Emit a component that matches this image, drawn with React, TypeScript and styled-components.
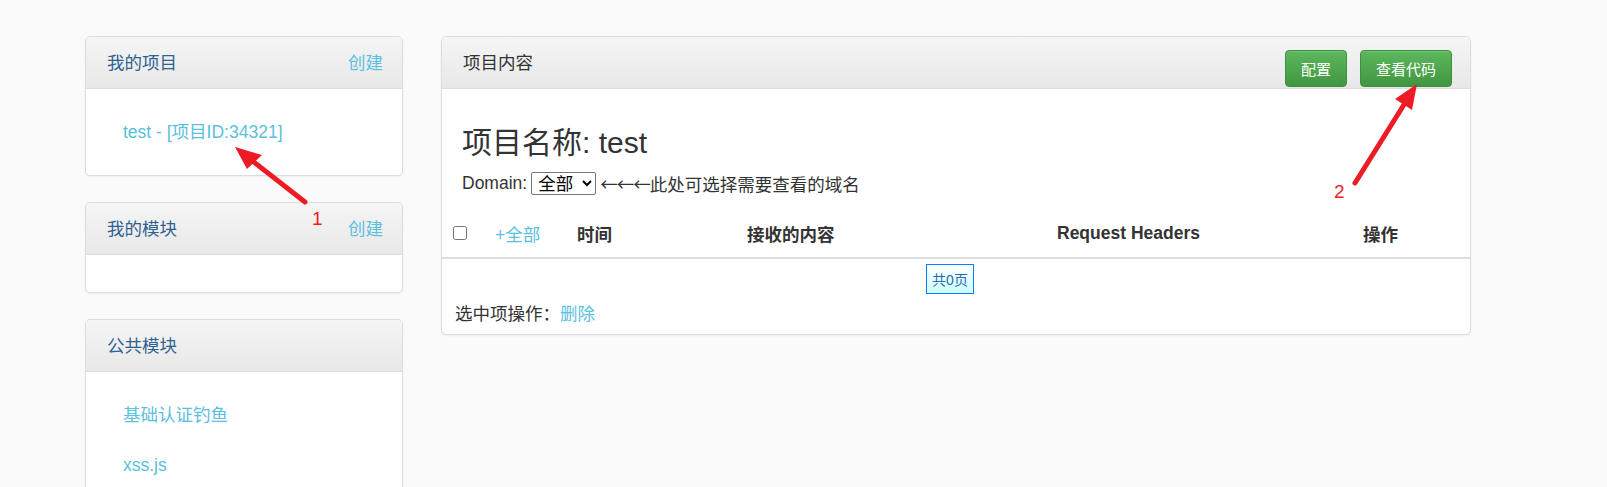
import styled, { createGlobalStyle } from "styled-components";

//-- GLOBAL
const GlobalStyle = createGlobalStyle`
  html, body {
    margin: 0;
    padding: 0;
    overflow: hidden;
    background: #fafafa;
    font-family: "Liberation Sans", "Noto Sans CJK SC", Arial, sans-serif;
    color: #333;
  }
  * { box-sizing: border-box; }
`;

//-- STYLED COMPONENTs
const Page = styled.div`
  position: relative;
  display: flex;
  align-items: flex-start;
  gap: 38px;
  width: 1607px;
  height: 487px;
  padding: 36px 0 0 85px;
  overflow: hidden;
`;

const Sidebar = styled.div`
  display: flex;
  flex-direction: column;
  gap: 26px;
  width: 318px;
  flex-shrink: 0;
`;

const Panel = styled.div<{ $width?: number }>`
  width: ${(p) => (p.$width ? `${p.$width}px` : "100%")};
  flex-shrink: 0;
  background: #fff;
  border: 1px solid #ddd;
  border-radius: 5px;
  box-shadow: 0 1px 2px rgba(0, 0, 0, 0.05);
`;

const PanelHeading = styled.div`
  display: flex;
  align-items: center;
  justify-content: space-between;
  height: 52px;
  padding: 0 19px 2px 21px;
  background: linear-gradient(to bottom, #f5f5f5 0%, #e8e8e8 100%);
  border-bottom: 1px solid #ddd;
  border-radius: 4px 4px 0 0;
`;

const PanelTitle = styled.span<{ $dark?: boolean }>`
  font-size: 17.5px;
  color: ${(p) => (p.$dark ? "#333" : "#2f6290")};
`;

const InfoLink = styled.a`
  color: #5bc0de;
  font-size: 17.5px;
  text-decoration: none;
  cursor: pointer;
`;

const SideBody = styled.div`
  padding: 17px 0;
  min-height: 37px;
`;

const SideItem = styled.div`
  display: flex;
  align-items: center;
  height: 52px;
  padding-left: 37px;
  padding-bottom: 3px;
`;

const MainHeading = styled(PanelHeading)`
  align-items: stretch;
  padding-right: 18px;
  padding-bottom: 0;
`;

const HeadingLeft = styled.div`
  display: flex;
  align-items: center;
  padding-bottom: 2px;
`;

const ButtonGroup = styled.div`
  display: flex;
  gap: 13px;
  align-self: flex-end;
  margin-bottom: 1px;
`;

const GreenButton = styled.button`
  height: 37px;
  padding: 0 15px;
  font-family: inherit;
  font-size: 15px;
  color: #fff;
  background: linear-gradient(to bottom, #5cb85c 0%, #419641 100%);
  border: 1px solid #3e8f3e;
  border-radius: 4px;
  box-shadow: inset 0 1px 0 rgba(255, 255, 255, 0.15);
  cursor: pointer;
`;

const Content = styled.div`
  padding: 0 20px;
`;

const ProjectTitle = styled.h3`
  margin: 0;
  padding-top: 37px;
  font-size: 30px;
  font-weight: normal;
  line-height: 34px;
`;

const DomainRow = styled.div`
  display: flex;
  align-items: center;
  margin-top: 10px;
  height: 26px;
  font-size: 17.5px;
  gap: 4px;
`;

const Arrows = styled.span`
  font-family: "Noto Sans CJK SC", sans-serif;
  letter-spacing: -1px;
`;

const DomainSelect = styled.select`
  height: 23px;
  width: 65px;
  font-family: inherit;
  font-size: 17.5px;
  color: #000;
  background: #fff;
  border: 1px solid #767676;
  border-radius: 2px;
  padding: 0 2px;
`;

const TableHead = styled.div`
  display: grid;
  grid-template-columns: 42px 82px 170px 310px 306px 1fr;
  align-items: center;
  height: 50px;
  margin-top: 13px;
  border-bottom: 2px solid #ddd;
`;

const HeadCell = styled.div<{ $link?: boolean }>`
  padding-left: 11px;
  font-size: 17.5px;
  font-weight: ${(p) => (p.$link ? "normal" : "bold")};
  color: ${(p) => (p.$link ? "#5bc0de" : "#333")};
  display: flex;
  align-items: center;
`;

const CheckBox = styled.input`
  width: 14px;
  height: 14px;
  margin: 0;
`;

const PagerRow = styled.div`
  display: flex;
  justify-content: center;
  margin-top: 5px;
  padding-right: 12px;
`;

const PagerBox = styled.span`
  display: flex;
  align-items: center;
  justify-content: center;
  width: 48px;
  height: 30px;
  font-size: 14px;
  color: #2a6cae;
  border: 1px solid #0a7cff;
  background: linear-gradient(to bottom, #ffffff 0%, #ccffff 100%);
`;

const BulkRow = styled.div`
  margin-top: 8px;
  padding: 0 0 8px 13px;
  font-size: 17.5px;
  line-height: 24px;
`;

const Overlay = styled.svg`
  position: absolute;
  top: 0;
  left: 0;
  pointer-events: none;
`;

//-- DATA
const columns = ["时间", "接收的内容", "Request Headers", "操作"];

//-- Pagina
const App: React.FC = () => {
  return (
    <>
      <GlobalStyle />
      <Page>
        <Sidebar>
          <Panel>
            <PanelHeading>
              <PanelTitle>我的项目</PanelTitle>
              <InfoLink>创建</InfoLink>
            </PanelHeading>
            <SideBody>
              <SideItem>
                <InfoLink>test - [项目ID:34321]</InfoLink>
              </SideItem>
            </SideBody>
          </Panel>

          <Panel>
            <PanelHeading>
              <PanelTitle>我的模块</PanelTitle>
              <InfoLink>创建</InfoLink>
            </PanelHeading>
            <SideBody />
          </Panel>

          <Panel>
            <PanelHeading>
              <PanelTitle>公共模块</PanelTitle>
            </PanelHeading>
            <SideBody>
              <SideItem>
                <InfoLink>基础认证钓鱼</InfoLink>
              </SideItem>
              <SideItem>
                <InfoLink>xss.js</InfoLink>
              </SideItem>
            </SideBody>
          </Panel>
        </Sidebar>

        <Panel $width={1030}>
          <MainHeading>
            <HeadingLeft>
              <PanelTitle $dark>项目内容</PanelTitle>
            </HeadingLeft>
            <ButtonGroup>
              <GreenButton>配置</GreenButton>
              <GreenButton>查看代码</GreenButton>
            </ButtonGroup>
          </MainHeading>

          <Content>
            <ProjectTitle>项目名称: test</ProjectTitle>
            <DomainRow>
              Domain:
              <DomainSelect defaultValue="all">
                <option value="all">全部</option>
              </DomainSelect>
              <span>
                <Arrows>←←←</Arrows>此处可选择需要查看的域名
              </span>
            </DomainRow>
          </Content>

          <TableHead>
            <HeadCell>
              <CheckBox type="checkbox" />
            </HeadCell>
            <HeadCell $link>+全部</HeadCell>
            {columns.map((c) => (
              <HeadCell key={c}>{c}</HeadCell>
            ))}
          </TableHead>

          <PagerRow>
            <PagerBox>共0页</PagerBox>
          </PagerRow>

          <BulkRow>
            选中项操作：<InfoLink>删除</InfoLink>
          </BulkRow>
        </Panel>

        {/* anotacoes vermelhas */}
        <Overlay width="1607" height="487" viewBox="0 0 1607 487">
          <g stroke="#ed1c24" strokeWidth="5" strokeLinecap="round" fill="#ed1c24">
            <line x1="305" y1="202" x2="250" y2="159" />
            <line x1="1355" y1="183" x2="1405" y2="103" />
          </g>
          <g fill="#ed1c24">
            <polygon points="235,147 262,155 247,169" />
            <polygon points="1417,84 1395,99 1412,110" />
          </g>
          <g fill="#ed1c24" fontFamily="'Liberation Sans', sans-serif" fontSize="19">
            <text x="312" y="225">1</text>
            <text x="1334" y="198">2</text>
          </g>
        </Overlay>
      </Page>
    </>
  );
};

export default App;
